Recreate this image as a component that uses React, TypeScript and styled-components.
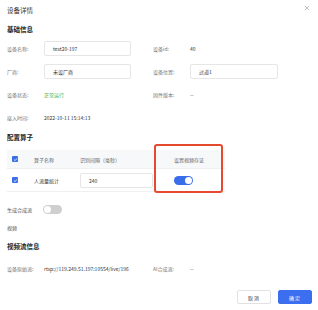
import React, { useState } from "react";
import styled, { createGlobalStyle } from "styled-components";

const GlobalStyle = createGlobalStyle`
  html, body {
    margin: 0;
    padding: 0;
    background: #fff;
  }
  body {
    font-family: "Noto Sans CJK SC", "Noto Sans", "Liberation Sans", sans-serif;
  }
`;

// 弹窗整体
const Modal = styled.div`
  width: 318px;
  height: 310px;
  box-sizing: border-box;
  padding: 0 6px 6px 7px;
  display: flex;
  flex-direction: column;
  background: #fff;
  font-size: 5px;
  color: #333;
`;

const Header = styled.div`
  height: 20px;
  display: flex;
  align-items: center;
  justify-content: space-between;
  font-size: 6.5px;
  color: #333;
`;

const CloseBtn = styled.button`
  border: 0;
  background: none;
  padding: 0;
  width: 6px;
  height: 6px;
  margin-right: 2px;
  margin-top: -4px;
  display: flex;
  cursor: pointer;
`;

const SectionTitle = styled.div<{ $h: number }>`
  height: ${(p) => p.$h}px;
  display: flex;
  align-items: center;
  font-size: 6.5px;
  font-weight: bold;
  color: #222;
`;

const InfoGrid = styled.div`
  display: grid;
  grid-template-columns: 37px 109px 37px 1fr;
  grid-auto-rows: 23px;
  align-items: center;
`;

const Label = styled.span`
  color: #777;
  white-space: nowrap;
`;

const Value = styled.span<{ $color?: string }>`
  color: ${(p) => p.$color || "#333"};
  white-space: nowrap;
`;

const Input = styled.div<{ $w: number }>`
  width: ${(p) => p.$w}px;
  height: 15px;
  box-sizing: border-box;
  border: 1px solid #e6e6e6;
  border-radius: 2px;
  padding-left: 8px;
  display: flex;
  align-items: center;
  color: #333;
`;

// 配置算子 表格
const TableWrap = styled.div`
  position: relative;
  width: 218px;
  margin-top: 5px;
`;

const TableRow = styled.div<{ $head?: boolean }>`
  display: grid;
  grid-template-columns: 27px 46px 75px 70px;
  align-items: center;
  height: ${(p) => (p.$head ? 18 : 22)}px;
  background: ${(p) => (p.$head ? "#f7f8fa" : "#fff")};
  border-bottom: 1px solid #f0f0f0;
  color: ${(p) => (p.$head ? "#666" : "#333")};
`;

const Cell = styled.div<{ $pl?: number }>`
  padding-left: ${(p) => p.$pl || 0}px;
  display: flex;
  align-items: center;
  white-space: nowrap;
`;

const Highlight = styled.div`
  position: absolute;
  left: 147px;
  top: -6px;
  width: 69px;
  height: 49px;
  box-sizing: border-box;
  border: 2px solid #e64a2e;
  border-radius: 3px;
  pointer-events: none;
`;

const CheckBox = styled.span`
  width: 6px;
  height: 6px;
  border-radius: 1px;
  background: #3b6fe8;
  display: flex;
  align-items: center;
  justify-content: center;
`;

const Switch = styled.button<{ $on: boolean }>`
  width: 19px;
  height: 9px;
  border: 0;
  padding: 0;
  border-radius: 5px;
  background: ${(p) => (p.$on ? "#3a6ee8" : "#cfcfcf")};
  position: relative;
  cursor: pointer;

  &::after {
    content: "";
    position: absolute;
    top: 1px;
    left: ${(p) => (p.$on ? "11px" : "1px")};
    width: 7px;
    height: 7px;
    border-radius: 50%;
    background: #fff;
  }
`;

const FormRow = styled.div<{ $h: number; $mt?: number }>`
  height: ${(p) => p.$h}px;
  margin-top: ${(p) => p.$mt || 0}px;
  display: flex;
  align-items: center;
  gap: 11px;
  color: #555;
`;

const Footer = styled.div`
  margin-top: auto;
  display: flex;
  justify-content: flex-end;
  gap: 7px;
`;

const Button = styled.button<{ $primary?: boolean }>`
  width: 34px;
  height: 14px;
  box-sizing: border-box;
  border-radius: 2px;
  border: 1px solid ${(p) => (p.$primary ? "#3b6ff0" : "#e2e2e2")};
  background: ${(p) => (p.$primary ? "#3b6ff0" : "#fff")};
  color: ${(p) => (p.$primary ? "#fff" : "#333")};
  font-family: inherit;
  font-size: 5px;
  letter-spacing: 1px;
  padding: 0;
  cursor: pointer;
`;

const Check = () => (
  <CheckBox>
    <svg width="5" height="5" viewBox="0 0 10 10">
      <path d="M2 5.2 L4.2 7.3 L8.2 2.8" fill="none" stroke="#fff" strokeWidth="1.6" />
    </svg>
  </CheckBox>
);

export default function App() {
  const [evidence, setEvidence] = useState(true); // 视频存证
  const [mixStream, setMixStream] = useState(false); // 生成合成流

  return (
    <>
      <GlobalStyle />
      <Modal>
        <Header>
          <span>设备详情</span>
          <CloseBtn aria-label="close">
            <svg width="6" height="6" viewBox="0 0 10 10">
              <path d="M1.5 1.5 L8.5 8.5 M8.5 1.5 L1.5 8.5" stroke="#aaa" strokeWidth="1.2" />
            </svg>
          </CloseBtn>
        </Header>

        <SectionTitle $h={17}>基础信息</SectionTitle>
        <InfoGrid>
          <Label>设备名称:</Label>
          <Input $w={87}>test20-197</Input>
          <Label>设备id:</Label>
          <Value>40</Value>

          <Label>厂商:</Label>
          <Input $w={87}>未设厂商</Input>
          <Label>设备位置:</Label>
          <Input $w={88}>过道1</Input>

          <Label>设备状态:</Label>
          <Value $color="#3cb34a">正常运行</Value>
          <Label>固件版本:</Label>
          <Value>--</Value>

          <Label>接入时间:</Label>
          <Value>2022-10-11 15:14:13</Value>
        </InfoGrid>

        <SectionTitle $h={16}>配置算子</SectionTitle>
        <TableWrap>
          <TableRow $head>
            <Cell $pl={5}>
              <Check />
            </Cell>
            <Cell>算子名称</Cell>
            <Cell>识别间隔（毫秒）</Cell>
            <Cell $pl={19}>设置视频存证</Cell>
          </TableRow>
          <TableRow>
            <Cell $pl={5}>
              <Check />
            </Cell>
            <Cell>人流量统计</Cell>
            <Cell>
              <Input $w={73}>240</Input>
            </Cell>
            <Cell $pl={19}>
              <Switch $on={evidence} onClick={() => setEvidence(!evidence)} />
            </Cell>
          </TableRow>
          <Highlight />
        </TableWrap>

        <FormRow $h={20} $mt={7}>
          <span>生成合成流</span>
          <Switch $on={mixStream} onClick={() => setMixStream(!mixStream)} />
        </FormRow>
        <FormRow $h={16}>
          <span>视频</span>
        </FormRow>

        <SectionTitle $h={22}>视频流信息</SectionTitle>
        <InfoGrid>
          <Label>设备原始流:</Label>
          <Value>rtsp://119.249.51.197:10554/live/196</Value>
          <Label>AI合成流:</Label>
          <Value>--</Value>
        </InfoGrid>

        <Footer>
          <Button>取消</Button>
          <Button $primary>确定</Button>
        </Footer>
      </Modal>
    </>
  );
}
